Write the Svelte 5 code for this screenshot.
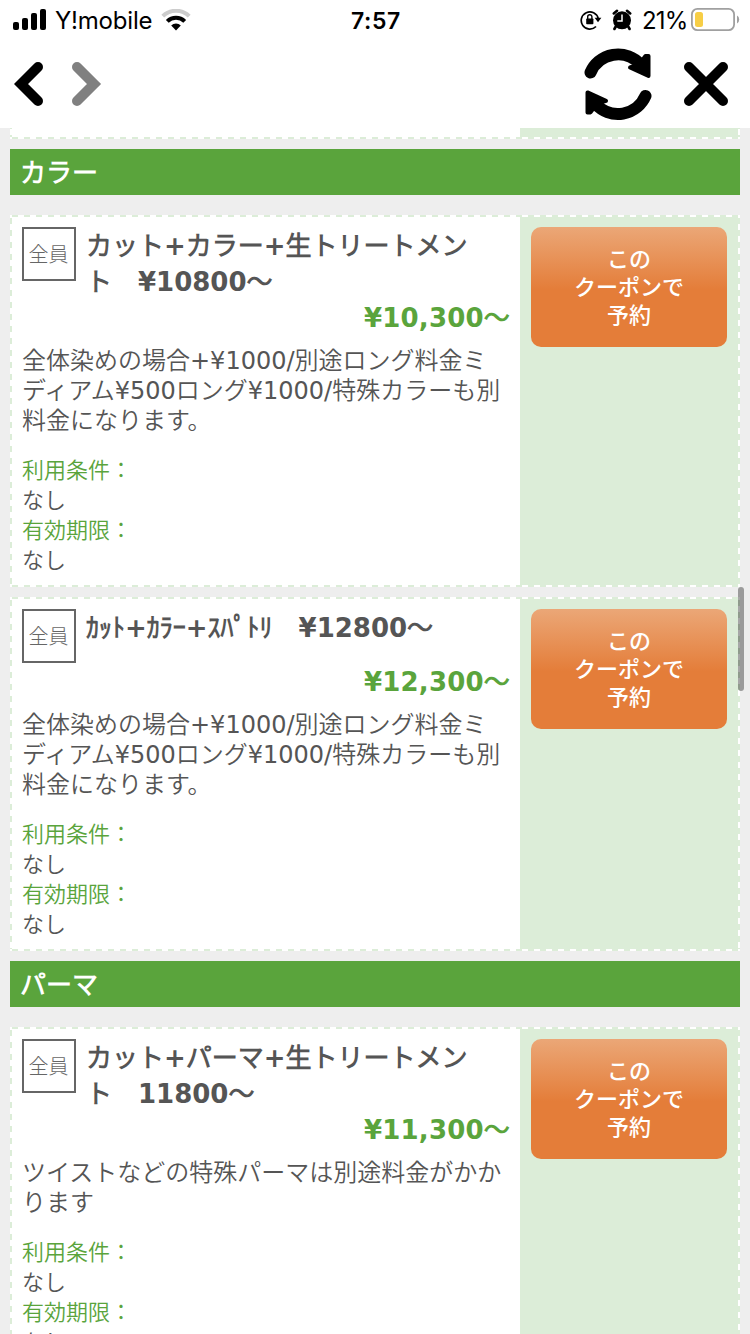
<script>
  const bodyText = '全体染めの場合+¥1000/別途ロング料金ミディアム¥500ロング¥1000/特殊カラーも別料金になります。';

  const sections = [
    {
      name: 'カラー',
      coupons: [
        { title: 'カット+カラー+生トリートメント　¥10800〜', price: '¥10,300〜', text: bodyText },
        { title: 'ｶｯﾄ+ｶﾗｰ+ｽﾊﾟﾄﾘ　¥12800〜', price: '¥12,300〜', text: bodyText }
      ]
    },
    {
      name: 'パーマ',
      coupons: [
        {
          title: 'カット+パーマ+生トリートメント　11800〜',
          price: '¥11,300〜',
          text: 'ツイストなどの特殊パーマは別途料金がかかります'
        }
      ]
    }
  ];
</script>

<div class="screen">
  <header>
    <div class="status">
      <div class="side">
        <svg class="signal" width="34" height="22" viewBox="0 0 34 22">
          <rect x="0" y="13" width="6" height="8" rx="2" />
          <rect x="9" y="9" width="6" height="12" rx="2" />
          <rect x="18" y="4" width="6" height="17" rx="2" />
          <rect x="27" y="0" width="6" height="21" rx="2" />
        </svg>
        <span class="carrier">Y!mobile</span>
        <svg class="wifi" width="30" height="22" viewBox="0 0 30 22">
          <path d="M1.8 7.2A18.7 18.7 0 0 1 28.2 7.2" fill="none" stroke="#ccc" stroke-width="4" />
          <path d="M6.3 12.3A12.3 12.3 0 0 1 23.7 12.3" fill="none" stroke="#000" stroke-width="4" />
          <path d="M10.2 16.6A6.8 6.8 0 0 1 19.8 16.6L15 21.6Z" />
        </svg>
      </div>
      <span class="clock">7:57</span>
      <div class="side right">
        <svg width="22" height="22" viewBox="0 0 22 22">
          <path d="M16 17.5A8.6 8.6 0 1 1 18.2 9.5" fill="none" stroke="#000" stroke-width="1.7" />
          <path d="M14.6 8.8H21.4L18 13.2Z" />
          <rect x="6.2" y="9.5" width="7.2" height="5.8" rx="0.8" />
          <path d="M7.7 10V7.8a2.1 2.1 0 0 1 4.2 0V10" fill="none" stroke="#000" stroke-width="1.4" />
        </svg>
        <svg class="alarm" width="20" height="22" viewBox="0 0 20 22">
          <circle cx="10" cy="11.3" r="9" />
          <path d="M1.8 4.4L5 1.8M18.2 4.4L15 1.8M3.8 17.5L2.4 20M16.2 17.5L17.6 20" stroke="#000" stroke-width="2.6" stroke-linecap="round" />
          <path d="M10 5.5V12H5.3" fill="none" stroke="#fff" stroke-width="1.5" />
        </svg>
        <span class="percent">21%</span>
        <svg class="battery" width="49" height="24" viewBox="0 0 49 24">
          <rect x="0.9" y="0.9" width="42.2" height="21.2" rx="5.5" fill="none" stroke="#a0a0a0" stroke-width="1.8" />
          <rect x="4" y="4" width="8" height="15" rx="2.5" fill="#f7ce46" />
          <path d="M46 7.5q2.2 1 2.2 4t-2.2 4z" fill="#a0a0a0" />
        </svg>
      </div>
    </div>

    <div class="toolbar">
      <svg width="30" height="46" viewBox="0 0 30 46">
        <path d="M24 6L7 23L24 40" fill="none" stroke="#000" stroke-width="10" stroke-linecap="round" />
      </svg>
      <svg class="forward" width="30" height="46" viewBox="0 0 30 46">
        <path d="M5 6L22 23L5 40" fill="none" stroke="#808080" stroke-width="10" stroke-linecap="round" />
      </svg>
      <svg class="reload" width="68" height="74" viewBox="0 0 68 74">
        <g id="arrow">
          <path d="M6.5 25.5A30 30 0 0 1 56 17" fill="none" stroke="#000" stroke-width="12" stroke-linecap="round" />
          <path d="M64.5 9V29L46 20.5L55 17.5L61.5 9Z" stroke="#000" stroke-width="4" stroke-linejoin="round" />
        </g>
        <use href="#arrow" transform="rotate(180 34 37.2)" />
      </svg>
      <svg class="close" width="46" height="46" viewBox="0 0 46 46">
        <path d="M6 6L40 40M40 6L6 40" stroke="#000" stroke-width="10" stroke-linecap="round" />
      </svg>
    </div>
  </header>

  <main>
    <div class="coupon cut">
      <div class="detail"></div>
    </div>

    {#each sections as section}
      <h2>{section.name}</h2>
      {#each section.coupons as coupon}
        <div class="coupon">
          <div class="detail">
            <div class="head">
              <span class="badge">全員</span>
              <h3>{coupon.title}</h3>
            </div>
            <p class="price">{coupon.price}</p>
            <p class="text">{coupon.text}</p>
            <dl>
              <dt>利用条件：</dt>
              <dd>なし</dd>
              <dt>有効期限：</dt>
              <dd>なし</dd>
            </dl>
          </div>
          <div class="action">
            <button>この<br />クーポンで<br />予約</button>
          </div>
        </div>
      {/each}
    {/each}
  </main>

  <div class="scrollbar"></div>
</div>

<style>
:global(body) {
  margin: 0;
}

.screen {
  position: relative;
  width: 750px;
  height: 1334px;
  overflow: hidden;
  background: #eee;
  color: #555;
  font-family: "DejaVu Sans", "Noto Sans CJK JP DemiLight", "Noto Sans CJK JP", sans-serif;
}

header {
  height: 128px;
  background: #fff;
  color: #000;
}

svg {
  display: block;
  flex: none;
}

.status {
  display: grid;
  grid-template-columns: 1fr 60px 1fr;
  align-items: center;
  height: 40px;
  padding: 0 11px 0 13px;
  font: 24px/40px Inter, sans-serif;
}

.side {
  display: flex;
  align-items: center;
}

.side.right {
  justify-content: flex-end;
  margin-right: -1px;
}

.carrier {
  margin: 2px 0 0 8px;
  width: 99px;
  line-height: 38px;
  letter-spacing: -0.2px;
}

.wifi {
  margin-left: 7px;
}

.clock {
  padding-top: 2px;
  line-height: 38px;
  text-align: center;
  font-weight: 600;
  font-size: 23px;
  letter-spacing: 0.6px;
}

.alarm {
  margin-left: 10px;
}

.percent {
  margin: 2px 0 0 10px;
  width: 45px;
  line-height: 38px;
  white-space: nowrap;
  letter-spacing: -0.8px;
}

.battery {
  margin-left: 4px;
}

.toolbar {
  display: flex;
  align-items: center;
  height: 88px;
  padding: 0 21px 0 14px;
}

.forward {
  margin-left: 28px;
}

.reload {
  margin-left: auto;
}

.close {
  margin-left: 31px;
}

main {
  padding: 0 10px;
}

h2 {
  box-sizing: border-box;
  height: 46px;
  margin: 0 0 20px;
  padding: 2px 0 0 10px;
  background: #5aa43c;
  color: #fff;
  font-size: 26px;
  line-height: 44px;
}

.coupon {
  --dash-x: #fff 0 2px, #dcedd8 2px 8px, #fff 8px 12px;
  --dash-y: #fff 0 3px, #dcedd8 3px 9px, #fff 9px 12px;
  display: flex;
  box-sizing: border-box;
  margin-bottom: 10px;
  padding: 2px;
  background:
    repeating-linear-gradient(90deg, var(--dash-x)) top / 100% 2px no-repeat,
    repeating-linear-gradient(90deg, var(--dash-x)) bottom / 100% 2px no-repeat,
    repeating-linear-gradient(var(--dash-y)) left / 2px 100% no-repeat,
    repeating-linear-gradient(var(--dash-y)) right / 2px 100% no-repeat,
    #dcedd8;
}

.coupon.cut {
  height: 31px;
  margin-top: -20px;
  clip-path: inset(20px 0 0 0);
}

.detail {
  box-sizing: border-box;
  width: 508px;
  padding: 10px;
  background: #fff;
}

.head {
  display: flex;
  align-items: flex-start;
  min-height: 54px;
}

.badge {
  box-sizing: border-box;
  flex: none;
  width: 54px;
  height: 54px;
  padding-right: 1px;
  border: 2px solid #666;
  color: #666;
  font-family: "Noto Sans CJK JP", sans-serif;
  font-size: 20px;
  font-weight: 300;
  line-height: 49px;
  text-align: center;
}

h3 {
  position: relative;
  top: 1px;
  flex: 1;
  margin: 0 0 0 10px;
  padding-right: 20px;
  font-size: 26px;
  line-height: 36px;
  word-break: break-all;
}

.price {
  position: relative;
  top: 1px;
  margin: 0;
  color: #5aa43c;
  font-size: 26px;
  font-weight: bold;
  line-height: 36px;
  letter-spacing: 0.2px;
  text-align: right;
}

.text {
  margin: 11px 0 20px;
  font-size: 24px;
  line-height: 30px;
  word-break: break-all;
}

dl {
  margin: 0 0 -1px;
  font-size: 22px;
  line-height: 30px;
}

dt {
  color: #5aa43c;
}

dd {
  margin: 0;
}

.action {
  flex: 1;
  padding: 10px 11px;
}

button {
  display: block;
  width: 100%;
  height: 120px;
  padding: 0 0 4px;
  border: 0;
  border-radius: 10px;
  background: linear-gradient(#eba777, #e47d39 52%);
  color: #fff;
  font: 500 22px/28px "Noto Sans CJK JP", sans-serif;
}

/* floats over the list, like the native one */
.scrollbar {
  position: absolute;
  top: 587px;
  right: 6px;
  width: 6px;
  height: 104px;
  border-radius: 3px;
  background: rgba(0, 0, 0, 0.35);
}
</style>
